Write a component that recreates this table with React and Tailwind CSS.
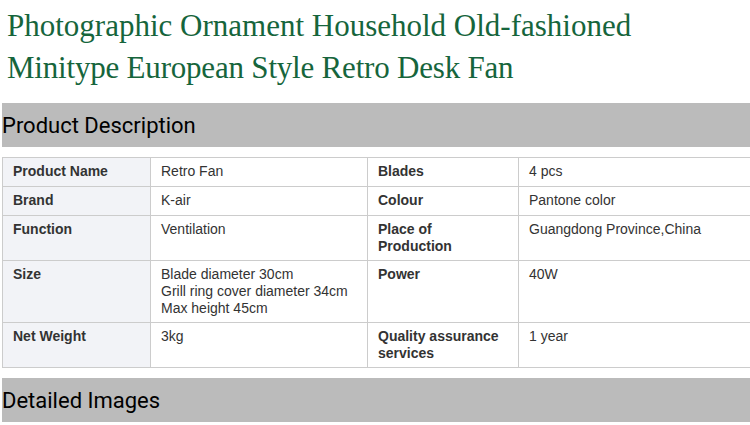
import React from "react";

const rows = [
  [["Product Name"], ["Retro Fan"], ["Blades"], ["4 pcs"]],
  [["Brand"], ["K-air"], ["Colour"], ["Pantone color"]],
  [["Function"], ["Ventilation"], ["Place of", "Production"], ["Guangdong Province,China"]],
  [["Size"], ["Blade diameter 30cm", "Grill ring cover diameter 34cm", "Max height 45cm"], ["Power"], ["40W"]],
  [["Net Weight"], ["3kg"], ["Quality assurance", "services"], ["1 year"]],
];

function Lines({ lines }) {
  return lines.map((l, i) => (
    <div key={i} className="whitespace-nowrap">
      {l}
    </div>
  ));
}

export default function App() {
  return (
    <div className="w-[750px] bg-white pl-[2px]">
      <h1 className="pl-[5px] pt-[5px] h-[100px] text-[31px] leading-[42px] font-normal text-[#16653c] [font-family:'Liberation_Serif',serif]">
        <div className="whitespace-nowrap">Photographic Ornament Household Old-fashioned</div>
        <div className="whitespace-nowrap tracking-[-0.2px]">Minitype European Style Retro Desk Fan</div>
      </h1>
      <div className="mt-[3px] h-[44px] flex items-center bg-[#bbbbbb] text-[22px] text-black [font-family:Roboto,sans-serif]">
        Product Description
      </div>
      <table className="mt-[10px] w-[748px] table-fixed border-collapse text-[14px] leading-[17px] text-[#333] [font-family:'Liberation_Sans',Arial,sans-serif]">
        <colgroup>
          <col className="w-[148px]" />
          <col className="w-[217px]" />
          <col className="w-[151px]" />
          <col className="w-[232px]" />
        </colgroup>
        <tbody>
          {rows.map((r, i) => (
            <tr key={i} className="h-[29px]">
              <td className="border border-[#cccccc] bg-[#f2f3f7] px-[10px] pt-[5px] pb-[5px] align-top font-bold">
                <Lines lines={r[0]} />
              </td>
              <td className="border border-[#cccccc] px-[10px] pt-[5px] pb-[5px] align-top">
                <Lines lines={r[1]} />
              </td>
              <td className="border border-[#cccccc] px-[10px] pt-[5px] pb-[5px] align-top font-bold">
                <Lines lines={r[2]} />
              </td>
              <td className="border border-[#cccccc] px-[10px] pt-[5px] pb-[5px] align-top">
                <Lines lines={r[3]} />
              </td>
            </tr>
          ))}
        </tbody>
      </table>
      <div className="mt-[10px] h-[44px] flex items-center bg-[#bbbbbb] text-[22px] text-black [font-family:Roboto,sans-serif]">
        Detailed Images
      </div>
    </div>
  );
}
